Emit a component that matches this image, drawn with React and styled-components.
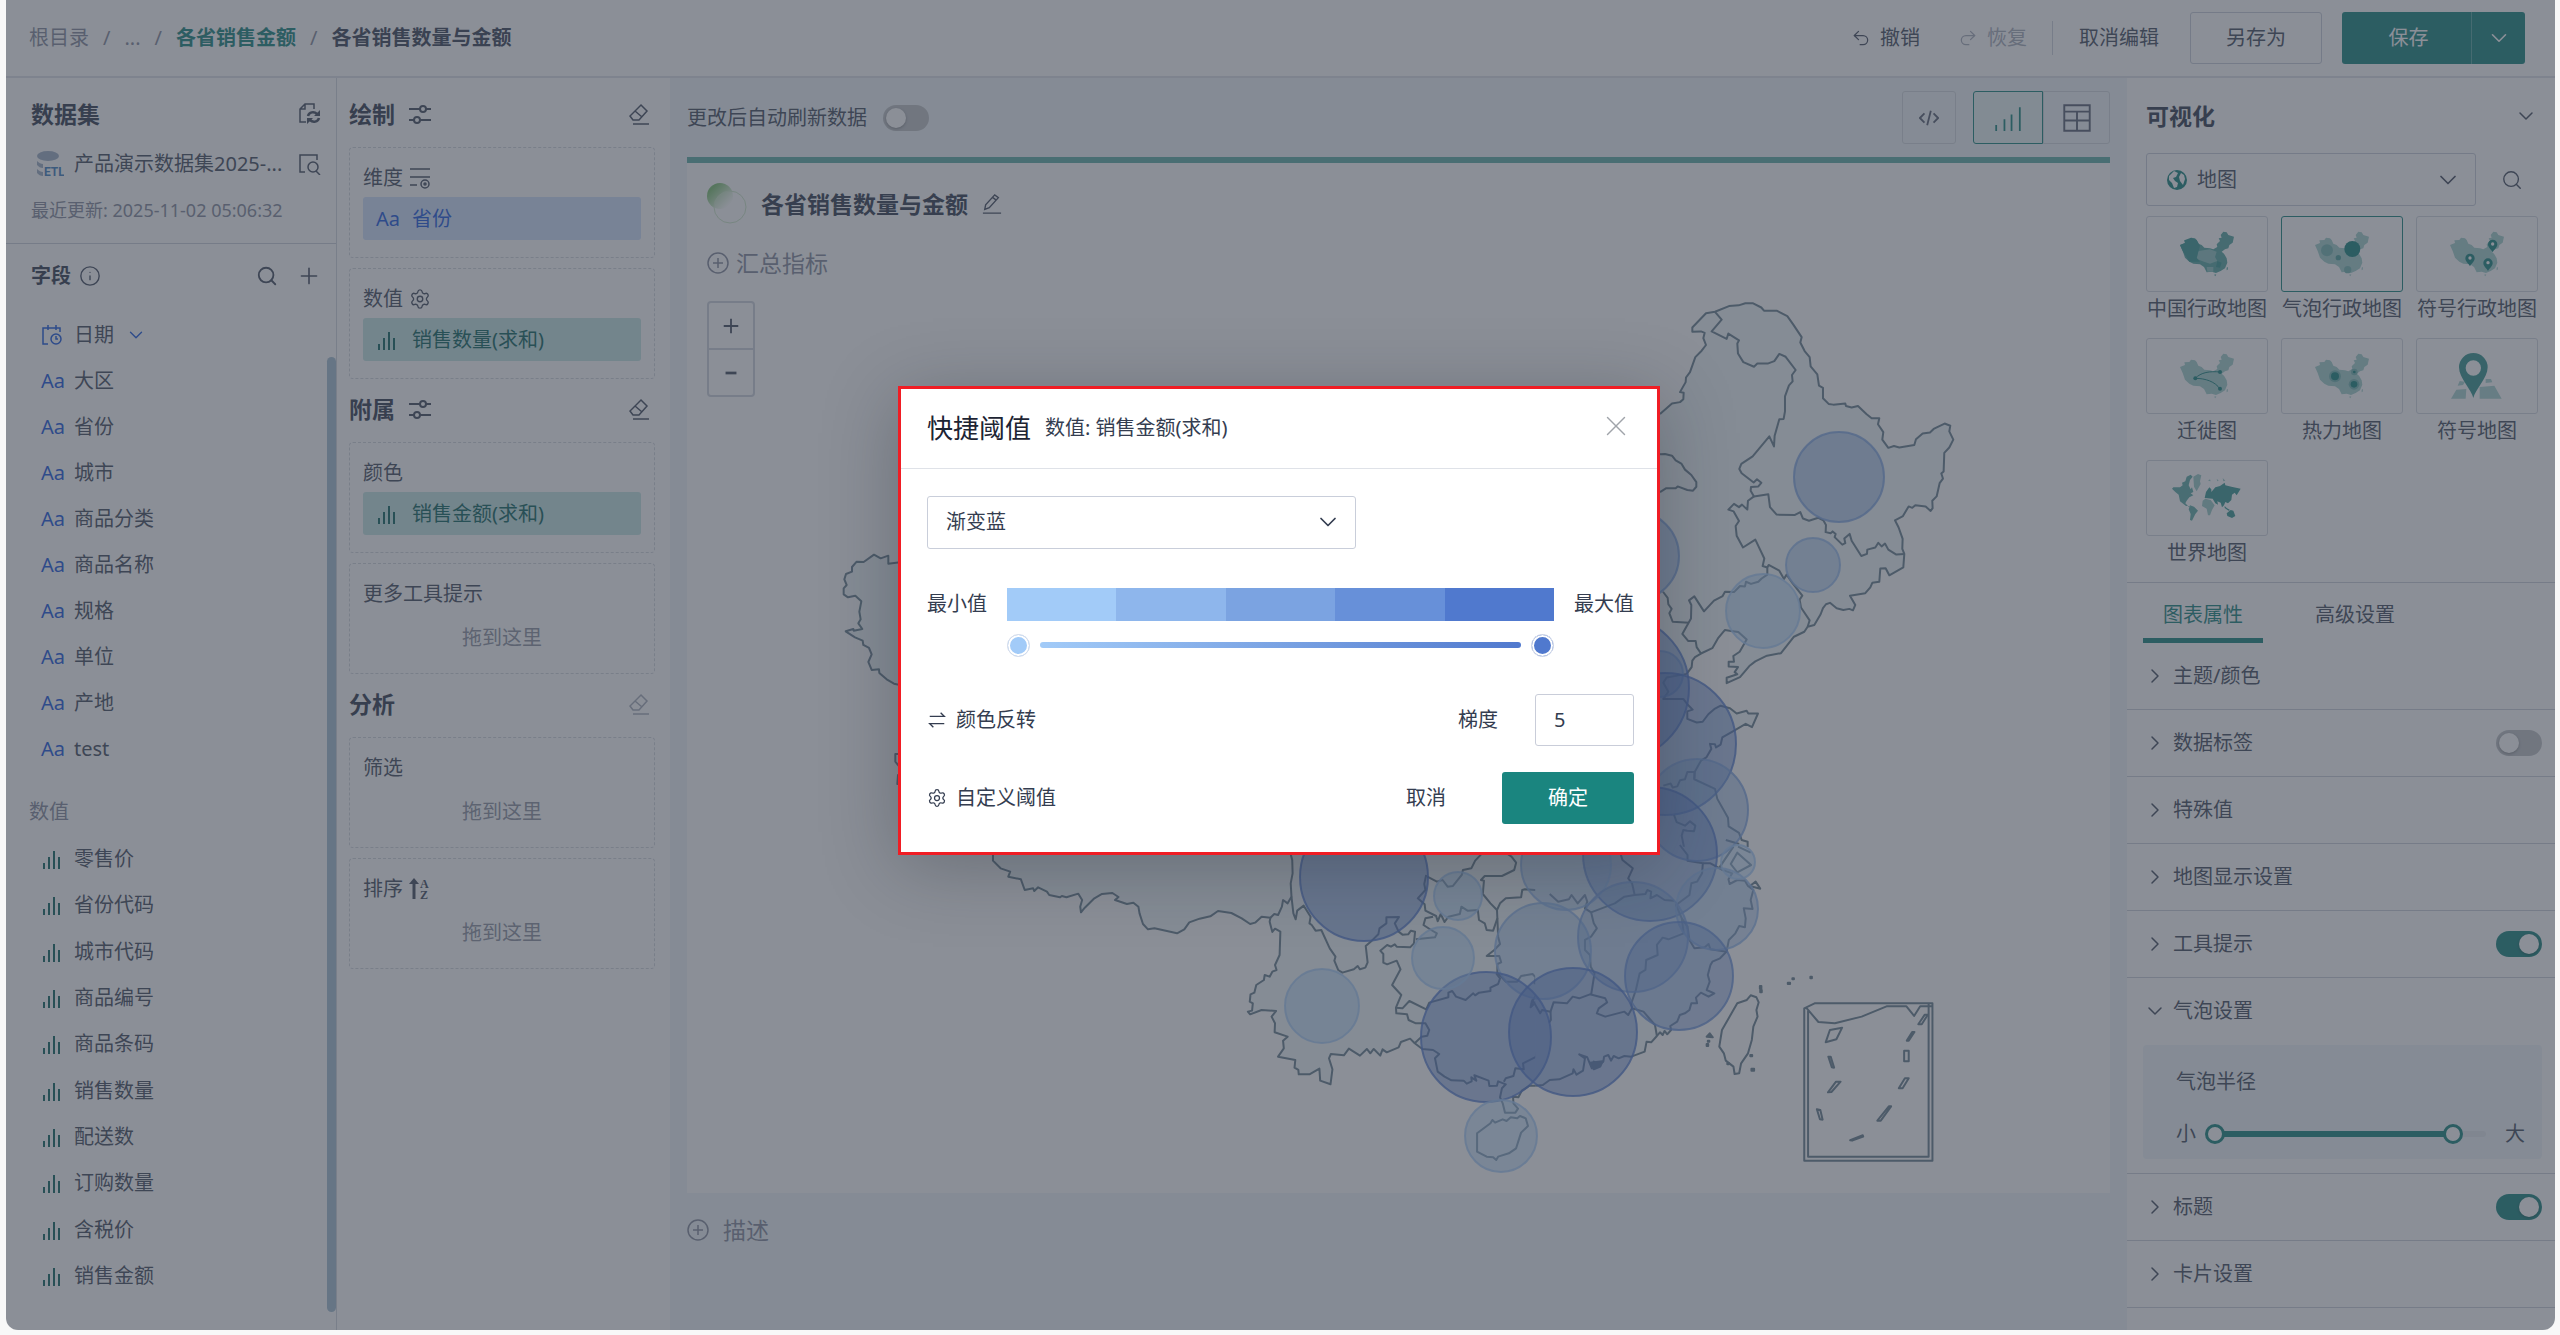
import React from 'react';
import styled, { createGlobalStyle } from 'styled-components';
import { ChevronDown, ChevronRight, Info, Plus, Redo2, Search, Settings, Undo2, X } from 'lucide-react';

const GlobalStyle = createGlobalStyle`
  * {
    box-sizing: border-box;
  }
  body {
    margin: 0;
    background: #f8f8f8;
    color: #454e60;
    font-family: 'Noto Sans', 'Noto Sans CJK SC', sans-serif;
    font-size: 20px;
    line-height: 30px;
  }
  button, input, select {
    margin: 0;
    padding: 0;
    border: 0;
    background: none;
    color: inherit;
    font: inherit;
  }
  a {
    color: inherit;
    text-decoration: none;
  }
  ul {
    margin: 0;
    padding: 0;
    list-style: none;
  }
  svg {
    display: block;
    flex: none;
  }
`;

const Frame = styled.div`
  position: relative;
  display: flex;
  flex-direction: column;
  min-height: calc(100vh - 5px);
  margin: 0 5px 5px 6px;
  overflow: hidden;
  border-radius: 0 0 12px 12px;
  background: #fff;
`;

/* header */

const Header = styled.header`
  display: flex;
  align-items: center;
  justify-content: space-between;
  height: 78px;
  padding: 0 30px 0 23px;
  border-bottom: 2px solid #dfe3e8;
`;

const Breadcrumb = styled.nav`
  display: flex;
  gap: 14px;
  color: #868c9d;
`;

const Crumb = styled.a`
  color: ${(p) => (p.$active ? '#1a857f' : p.$current ? '#3c4558' : '#868c9d')};
  font-weight: ${(p) => (p.$active || p.$current ? 700 : 400)};
`;

const Actions = styled.div`
  display: flex;
  align-items: center;
`;

const TextButton = styled.button`
  display: flex;
  align-items: center;
  gap: 9px;
  margin-right: ${(p) => p.$after || 0}px;
  color: ${(p) => (p.disabled ? '#a9aebb' : 'inherit')};
`;

const Divider = styled.span`
  width: 1px;
  height: 34px;
  margin-right: 26px;
  background: #cfd4dc;
`;

const OutlineButton = styled.button`
  width: 132px;
  height: 52px;
  margin-right: 20px;
  border: 1px solid #c9ceda;
  border-radius: 3px;
`;

const SaveGroup = styled.div`
  display: flex;
  height: 52px;
  overflow: hidden;
  border-radius: 3px;
  background: #1a857f;
  color: #fff;
`;

const SaveButton = styled.button`
  width: 130px;
  padding-left: 4px;
  border-right: 1px solid #58a8a3;
`;

const SaveMore = styled.button`
  display: grid;
  place-items: center;
  width: 53px;
`;

/* columns */

const Body = styled.div`
  display: flex;
  flex: 1;
`;

const Dataset = styled.aside`
  display: flex;
  flex-direction: column;
  flex: 0 0 331px;
  border-right: 1px solid #d3d8df;
`;

const DatasetHead = styled.div`
  padding: 0 15px 19px 25px;
  border-bottom: 1px solid #cdd2da;
`;

const HeadRow = styled.div`
  display: flex;
  align-items: center;
  justify-content: space-between;
  height: ${(p) => p.$height}px;
`;

const Title = styled.h2`
  margin: 0;
  color: #343d50;
  font-size: 23px;
  font-weight: 700;
  line-height: 34px;
`;

const DatasetName = styled.div`
  display: flex;
  align-items: center;
  gap: 10px;
  padding-left: 5px;
`;

const FieldsHead = styled.div`
  display: flex;
  align-items: center;
  justify-content: space-between;
  height: 64px;
  padding: 0 14px 0 25px;
`;

const FieldsTitle = styled.h3`
  margin: 0;
  color: #343d50;
  font-size: 20px;
  font-weight: 700;
`;

const Inline = styled.div`
  display: flex;
  align-items: center;
  gap: ${(p) => p.$gap}px;
`;

const Updated = styled.p`
  margin: 0;
  padding-top: 17px;
  color: #868c9d;
  font-size: 18px;
  line-height: 28px;
`;

const IconButton = styled.button`
  display: grid;
  place-items: center;
  color: ${(p) => (p.disabled ? '#a9aebb' : 'inherit')};
`;

const Fields = styled.div`
  position: relative;
  display: flex;
  flex: 1;
  flex-direction: column;
  padding: 4px 0 31px 35px;
`;

const FieldList = styled.ul`
  display: grid;
  flex: ${(p) => (p.$grow ? 1 : 'none')};
  grid-auto-rows: minmax(46px, 1fr);
`;

const Field = styled.li`
  display: flex;
  align-items: center;
  gap: 11px;
`;

const FieldMark = styled.span`
  width: 22px;
  color: ${(p) => (p.$measure ? '#0f6661' : '#1d5be0')};
`;

const GroupName = styled.div`
  margin: 25px 0 9px -12px;
  color: #868c9d;
`;

const ScrollThumb = styled.span`
  position: absolute;
  top: 49px;
  right: 0;
  bottom: 18px;
  width: 9px;
  border-radius: 5px;
  background: #a6c0d3;
`;

const Draw = styled.section`
  flex: 0 0 333px;
  padding: 6px 15px 0 12px;
`;

const DrawHeadRow = styled.div`
  display: flex;
  align-items: center;
  justify-content: space-between;
  height: 63px;
  padding: 0 5px 4px 0;
`;

const DropList = styled.div`
  display: grid;
  gap: 10px;
`;

const DropBox = styled.div`
  height: 111px;
  padding: 15px 13px;
  border: 1px dashed #d3d7de;
  border-radius: 4px;
`;

const DropLabel = styled.div`
  display: flex;
  align-items: center;
  gap: 6px;
  height: 34px;
  padding-bottom: 4px;
`;

const Hint = styled.div`
  padding-top: 10px;
  color: #8f95a4;
  text-align: center;
`;

const Pill = styled.div`
  display: flex;
  align-items: center;
  gap: 14px;
  height: 43px;
  padding-left: 13px;
  border-radius: 3px;
  background: ${(p) => (p.$measure ? '#c5e6e4' : '#d0e1fd')};
  color: ${(p) => (p.$measure ? '#0f6661' : '#1d5be0')};
`;

/* canvas */

const Center = styled.main`
  flex: 1;
  min-width: 0;
  padding: 0 17px;
  background: #f0f6f9;
`;

const Toolbar = styled.div`
  display: flex;
  align-items: center;
  justify-content: space-between;
  height: 79px;
`;

const SwitchLabel = styled.label`
  display: flex;
  align-items: center;
  gap: 16px;
`;

const Switch = styled.input`
  appearance: none;
  flex: none;
  width: 46px;
  height: 26px;
  padding: 3px;
  border-radius: 13px;
  background: #bfc2c6;

  &::before {
    content: '';
    display: block;
    width: 20px;
    height: 20px;
    border-radius: 10px;
    background: #fff;
    box-shadow: 0 1px 3px rgba(0, 0, 0, 0.3);
  }
  &:checked {
    background: #1a857f;
  }
  &:checked::before {
    margin-left: 20px;
  }
`;

const ToolButton = styled.button`
  display: grid;
  place-items: center;
  width: ${(p) => p.$width}px;
  height: 53px;
  border: 1px solid ${(p) => (p.$active ? '#1a857f' : '#d3d8df')};
  border-radius: ${(p) => p.$radius || '3px'};
  background: ${(p) => (p.$active ? '#eaf6f4' : 'transparent')};
  color: ${(p) => (p.$active ? '#1a857f' : '#5b6375')};
`;

const Card = styled.section`
  border-top: 6px solid #5fb0a8;
  background: #fff;
`;

const CardTitle = styled.div`
  display: flex;
  align-items: center;
  gap: 14px;
  height: 84px;
  padding: 0 0 2px 20px;
`;

const AddButton = styled.button`
  display: flex;
  align-items: center;
  gap: 7px;
  height: 32px;
  margin: 0 0 11px 20px;
  color: #868c9d;
  font-size: 23px;
  line-height: 32px;
`;

const Description = styled(AddButton)`
  gap: 14px;
  margin: 21px 0 0 0;
`;

const MapArea = styled.div`
  position: relative;

  > svg {
    width: 100%;
    height: auto;
  }
`;

const ZoomControl = styled.div`
  position: absolute;
  top: 11px;
  left: 20px;
  width: 48px;
  border: 2px solid #cfd4dc;
  border-radius: 4px;
`;

const ZoomButton = styled.button`
  display: grid;
  place-items: center;
  width: 100%;
  height: 45px;

  & + & {
    height: 47px;
    border-top: 2px solid #cfd4dc;
  }
`;

/* visual settings */

const Visual = styled.aside`
  flex: 0 0 428px;
`;

const VisualTop = styled.div`
  padding: 0 17px 14px 19px;
  border-bottom: 1px solid #cdd2da;
`;

const SelectBox = styled.div`
  display: grid;
  flex: none;
  align-items: center;
  width: ${(p) => p.$width}px;
  height: 53px;
  border: 1px solid #c9ceda;
  border-radius: 3px;

  > * {
    grid-area: 1 / 1;
  }
  > svg {
    pointer-events: none;
  }
  > svg:last-child {
    justify-self: end;
    margin-right: 13px;
  }
`;

const Select = styled.select`
  appearance: none;
  width: 100%;
  height: 100%;
  padding-left: ${(p) => p.$indent}px;
`;

const GlobeIcon = styled.svg`
  margin-left: 19px;
`;

const ChartGrid = styled.div`
  display: grid;
  grid-template-columns: repeat(3, 1fr);
  gap: 14px 13px;
  padding-top: 10px;
`;

const ChartType = styled.button`
  display: flex;
  flex-direction: column;
  align-items: center;
  gap: 2px;
`;

const Thumb = styled.span`
  display: grid;
  place-items: center;
  width: 100%;
  height: 76px;
  border: 1px solid ${(p) => (p.$active ? '#1a857f' : '#d3d8df')};
  border-radius: 3px;
`;

const Tabs = styled.div`
  display: flex;
  gap: 32px;
  padding-left: 16px;
`;

const Tab = styled.button`
  height: 60px;
  padding: 8px 20px 0;
  border-bottom: 5px solid ${(p) => (p.$active ? '#1a857f' : 'transparent')};
  color: ${(p) => (p.$active ? '#1a857f' : 'inherit')};
`;

const Section = styled.div`
  border-bottom: 1px solid #cdd2da;
`;

const SectionHead = styled.div`
  display: flex;
  align-items: center;
  justify-content: space-between;
  height: 66px;
  padding: 0 13px 0 16px;
`;

const SectionButton = styled.button`
  display: flex;
  align-items: center;
  gap: 6px;
`;

const RadiusPanel = styled.div`
  display: grid;
  gap: 22px;
  margin: 1px 13px 14px 16px;
  padding: 22px 17px 10px 33px;
  border-radius: 4px;
  background: #f0f6f9;
`;

const RangeRow = styled.div`
  display: flex;
  align-items: center;
  gap: 9px;
`;

const RangeTrack = styled.div`
  position: relative;
  display: flex;
  align-items: center;
  flex: 1;
  height: 20px;
  padding: 0 10px;

  &::before {
    content: '';
    flex: 1;
    height: 6px;
    border-radius: 3px;
    background: linear-gradient(to right, #1a857f ${(p) => p.$high}%, #e4e8ee ${(p) => p.$high}%);
  }
`;

const Range = styled.input`
  position: absolute;
  inset: 0;
  appearance: none;
  width: 100%;
  pointer-events: none;

  &::-webkit-slider-thumb {
    appearance: none;
    width: 20px;
    height: 20px;
    border: 3px solid #1a857f;
    border-radius: 10px;
    background: #fff;
    pointer-events: auto;
  }
`;

/* dialog */

const Mask = styled.div`
  position: absolute;
  inset: 0;
  display: grid;
  place-items: center;
  padding: 0 3px 90px 0;
  background: rgba(57, 64, 78, 0.59);
`;

const Dialog = styled.div`
  width: 762px;
  border: 3px solid #f01d24;
  background: #fff;
  color: #343d50;
  box-shadow: 0 12px 70px rgba(20, 30, 40, 0.28);
`;

const DialogHead = styled.div`
  display: flex;
  align-items: center;
  height: 80px;
  padding: 0 24px 0 26px;
  border-bottom: 1px solid #dfe2e8;
`;

const DialogTitle = styled.h2`
  margin: 0 14px 0 0;
  font-size: 26px;
  font-weight: 400;
  line-height: 38px;
  color: #1d2433;
`;

const Close = styled(IconButton)`
  margin-left: auto;
  padding-bottom: 5px;
  color: #a0a4aa;
`;

const DialogBody = styled.div`
  padding: 27px 23px 28px 26px;
`;

const ColorRow = styled.div`
  display: flex;
  align-items: center;
  gap: 20px;
  padding-top: 39px;
`;

const ColorBar = styled.div`
  display: flex;
  flex: 1;
  height: 33px;
`;

const ColorStep = styled.span`
  flex: 1;
  background: ${(p) => p.$color};
`;

const StopRow = styled.div`
  display: flex;
  align-items: center;
  gap: 10px;
  padding: 13px 80px 37px;
`;

const Stop = styled.button`
  width: 23px;
  height: 23px;
  border: 1px solid #d9deea;
  border-radius: 12px;
  background: ${(p) => p.$color};
  box-shadow: inset 0 0 0 2px #fff;
`;

const StopLine = styled.span`
  flex: 1;
  height: 6px;
  border-radius: 3px;
  background: linear-gradient(to right, #a2cbf8, #5079ce);
`;

const DialogRow = styled.div`
  display: flex;
  align-items: center;
  justify-content: space-between;
  padding-bottom: ${(p) => p.$after || 0}px;
`;

const StepLabel = styled.label`
  display: flex;
  align-items: center;
  gap: 37px;
`;

const StepInput = styled.input`
  width: 99px;
  height: 52px;
  padding-left: 18px;
  border: 1px solid #c9cdd9;
  border-radius: 3px;
`;

const Confirm = styled.button`
  width: 132px;
  height: 52px;
  border-radius: 3px;
  background: #1a857f;
  color: #fff;
`;

const PALETTE = ['#a2cbf8', '#8eb6ec', '#7ba3e1', '#6790d9', '#5079ce'];

const DIMENSIONS = ['大区', '省份', '城市', '商品分类', '商品名称', '规格', '单位', '产地', 'test'];
const MEASURES = ['零售价', '省份代码', '城市代码', '商品编号', '商品条码', '销售数量', '配送数', '订购数量', '含税价', '销售金额'];

// cx, cy, r, palette index
const BUBBLES = [
  [1839, 477, 45, 2], [1813, 565, 27, 1], [1763, 611, 37, 0], [1634, 556, 45, 2],
  [1660, 674, 23, 1], [1616, 688, 73, 4], [1665, 744, 71, 4], [1697, 810, 51, 2],
  [1650, 854, 67, 4], [1717, 909, 41, 1], [1738, 862, 17, 0], [1566, 865, 45, 1],
  [1543, 951, 48, 1], [1633, 937, 55, 2], [1679, 976, 54, 3], [1573, 1032, 64, 4],
  [1486, 1037, 65, 4], [1501, 1136, 36, 0], [1364, 877, 64, 4], [1458, 896, 24, 0],
  [1443, 958, 31, 0], [1322, 1006, 37, 0],
];

const NORTHEAST_LAND =
  'M180 347 216 318 240 314 250 306 251 288 240 286 257 258 258 245 270 230 286 188 305 170 318 154 310 135 314 120 303 116 277 117 277 105 318 65 345 61 387 45 416 43 436 37 458 37 484 49 492 58 530 58 562 73 580 97 605 132 601 147 614 171 629 188 632 214 652 236 657 268 669 274 669 303 686 319 700 321 736 318 738 325 755 329 774 325 800 348 815 359 838 359 834 376 850 398 847 419 865 442 882 437 898 441 943 434 948 418 968 402 990 399 1001 389 1034 374 1051 380 1048 396 1060 419 1048 441 1033 456 1031 508 1024 514 1029 528 1019 541 1010 578 997 590 998 611 992 619 977 606 946 603 937 610 926 606 909 633 885 645 896 665 908 697 907 725 913 739 910 777 868 799 857 779 841 780 838 817 817 820 811 833 796 849 750 856 766 882 759 897 748 893 730 896 710 891 690 876 678 880 669 891 662 908 643 938 623 943 613 957 582 971 543 1017 501 1024 466 1040 448 1053 420 1084 380 1101 380 1086 412 1076 404 1070 414 1056 386 1054 386 1041 402 1041 400 1025 419 1013 440 979 415 958 393 955 375 952 355 974 337 1003 303 1018 285 1028 277 1038 275 1056 260 1075 200 1085 190 1100 205 1125 190 1145 225 1145 250 1145 262 1160 278 1175 262 1180 262 1201 290 1211 308 1209 325 1188 345 1172 362 1164 390 1171 410 1186 440 1178 445 1186 474 1186 456 1224 437 1215 400 1235 367 1253 362 1273 348 1281 345 1272 330 1271 334 1285 319 1309 303 1318 284 1350 283 1370 345 1397 352 1425 384 1478 386 1502 417 1520 425 1540 443 1545 443 1560';

const NORTHEAST_BORDERS = [
  'M345 61 365 83 335 116 380 137 385 122 417 141 412 150 414 178 430 202 462 215 472 206 503 206 523 199 538 179 557 187 587 224 576 238 578 256 567 267 555 298 555 340 551 361 538 362 524 408 522 438 508 410 458 466 424 487 418 501 425 513 461 539 471 530 484 540 475 550 453 552 452 562 462 578 505 572 510 608 530 629 585 630 601 622 609 640 627 646 655 638 670 645 678 658 677 678 692 681 698 676 707 683 704 692 727 713 736 709 733 696 749 683 755 702 784 745 801 739 802 727 826 721 835 708 845 718 855 710 865 727 889 741 913 739',
  'M462 578 444 590 442 615 426 601 417 608 402 599 385 615 401 620 417 647 407 661 410 688 429 721 466 699 493 752 488 773 502 777 506 770 538 786 552 809 560 797 577 820 607 856 599 867 603 889 629 925 623 943',
  'M502 777 502 797 485 808 475 817 453 823 438 817 435 830 420 829 402 846 375 845 368 857 342 870 312 900 283 858 267 869 274 882 273 920 247 963 265 983 287 983 290 1000 303 1018',
  'M189 845 203 862 205 880 215 893 208 905 218 929 267 932',
  'M180 460 195 459 216 464 227 477 244 486 255 503 274 518 289 538 289 551 279 562 262 560 233 550 227 555 199 555 180 566',
  'M283 1370 284 1350 262 1350 255 1370 240 1373 232 1390 218 1393 212 1382 190 1388',
  'M222 1470 230 1490 255 1500 270 1488 286 1500 282 1516 262 1514 250 1512 245 1528 252 1560',
];

const WEST_LAND =
  'M210 97 175 101 175 77 152 85 132 74 101 96 80 95 66 111 66 125 48 132 43 148 50 165 41 175 41 193 54 202 76 197 94 214 88 245 92 268 85 280 97 297 71 302 70 297 47 304 75 322 98 332 100 345 117 354 125 373 115 396 125 420 147 418 148 429 170 448 192 461 210 465';

const WEST_BORDER = 'M210 672H196V695L208 710M212 735H204L202 762H212';

const SOUTHWEST_LAND =
  'M60 30 60 62 80 85 105 95 100 110 133 118 143 150 165 145 168 153 178 142 201 155 207 165 235 172 240 168 252 172 283 161 293 180 288 200 290 217 300 203 325 175 345 162 372 159 388 171 379 180 410 192 427 188 440 200 443 220 452 252 465 268 482 265 541 280 560 268 573 247 600 236 628 229 648 213 683 219 710 235 732 252 745 248 762 230 785 233 783 245 790 276 797 266 811 275 809 345 797 375 801 390 790 395 783 410 770 405 768 420 748 435 743 458 733 463 731 485 739 490 737 512 726 515 732 523 762 510 800 513 788 530 797 550 796 577 830 590 818 602 820 625 805 650 850 660 848 683 858 690 859 703 887 703 913 686 915 722 942 733 947 688 938 655 943 642 977 646 990 626 1019 647 1037 627 1046 640 1055 627 1072 647 1078 628 1089 637 1120 622 1126 606 1150 596 1162 610 1182 627 1210 630 1226 642 1215 655 1222 695 1240 710 1258 721 1290 722 1298 731 1311 724 1310 712 1323 722 1318 706 1355 722 1357 738 1377 737 1380 724 1400 733 1390 745 1385 772 1392 790 1398 818 1425 818 1432 806 1420 790 1419 770 1433 772 1442 752 1462 737 1477 737';

const SOUTHWEST_BORDERS = [
  'M835 30 842 60 843 100 838 130 840 170 830 190 818 180 815 200 805 225 795 222 785 233',
  'M840 170 845 220 851 238 855 212 872 197 890 230 887 250 893 255 903 272 918 270 940 325 955 350 952 362 962 390 973 398 1003 388 1013 378 1019 388 1033 383 1039 367 1034 318 1050 302 1067 283 1070 265 1088 250 1088 232 1121 231 1110 250 1120 275 1130 284 1145 283 1152 272 1163 275 1160 310 1150 322 1115 320 1110 313 1100 320 1090 315 1072 332 1080 342 1080 368 1090 373 1115 362 1125 388 1103 435 1127 465 1113 503 1130 505 1148 483 1192 508 1200 488 1250 472 1250 458 1260 453 1270 470 1295 480 1315 460 1320 466 1330 458 1360 453 1360 443 1380 432 1385 415 1375 400',
  'M1113 503 1114 520 1142 523 1146 540 1165 550 1190 550 1200 570 1195 587 1180 590 1162 610',
  'M1192 105 1187 132 1190 150 1170 175 1188 193 1190 212 1218 228 1222 244 1230 222 1240 246 1250 230 1280 222 1284 200 1300 212 1327 210 1330 240 1345 250 1350 270 1367 272 1378 235 1377 210 1360 190 1340 162 1343 122 1335 120 1345 108 1390 108 1422 90 1427 68 1415 50 1390 30',
  'M1195 110 1220 125 1235 120 1248 140 1262 138 1285 105 1288 90 1310 85 1320 62 1340 38',
  'M1377 210 1385 190 1400 175 1440 172 1443 150 1450 148 1500 152 1535 185 1568 170',
  'M1210 230 1190 235 1185 255 1205 270 1220 280 1215 292 1165 298',
  'M1378 235 1380 290 1385 312 1370 330 1350 348 1383 348 1388 367 1378 372 1378 400',
  'M1380 400 1400 425 1430 425 1440 408 1470 402 1478 412 1475 430 1490 432 1480 465 1468 485 1465 502 1480 485 1495 520',
  'M1518 520 1515 560 1500 575 1485 600 1480 650 1445 670 1447 688 1425 685 1420 708 1400 715 1395 725',
  'M1325 880 1360 850 1365 840 1372 848 1392 838 1402 843 1413 832 1430 835 1437 828 1452 835 1458 858 1440 878 1427 925 1408 940 1380 950 1375 960 1367 952 1350 950 1325 935Z',
];

const SOUTHEAST_LAND =
  'M92 737 112 735 130 720 155 718 190 700 192 688 200 704 217 692 222 655 207 643 228 652 240 685 245 665 262 672 270 665 272 650 283 645 290 662 297 648 310 655 325 648 343 650 378 635 383 605 395 607 410 588 418 577 425 585 430 573 437 583 447 570 445 558 463 545 470 525 483 520 495 510 500 490 515 490 512 473 525 458 545 470 560 460 540 450 548 425 543 405 550 375 555 365 575 355 592 335 598 300 615 280 625 258 640 262 642 235 637 205 660 207 655 180 662 150 648 138 640 122 620 120 600 132 597 118 607 100 582 90 575 80 610 20';

const SOUTHEAST_BORDERS = [
  'M130 162 152 185 180 178 187 165 203 190 222 165 228 185 222 205 238 217 245 250 253 265 238 290 222 300 222 330 235 345 237 380 247 400 238 465',
  'M238 217 300 190 325 170 352 165 345 130 335 115 347 85 320 60 312 30',
  'M352 165 380 162 385 150 395 155 393 175 410 165 430 180 455 182',
  'M470 15 490 45 490 62 530 70 528 100 515 125 500 130 495 165 460 195 475 235 480 280 440 298 425 293 410 315 412 345 382 360 380 390 365 400 355 450 343 490 345 505 375 515 405 555 410 588',
  'M530 70 550 70 582 90',
  'M475 235 490 260 495 300 508 325 535 322 545 312 550 328 592 335',
  'M82 498 85 480 105 520 110 510 132 515 140 487 175 490 190 470 207 475 235 463 275 475 280 487 258 505 253 520 275 530 325 515 335 525 345 505',
  'M132 515 133 540 128 548',
  'M655 466 670 472 676 487 670 510 673 530 662 560 658 600 648 640 630 670 625 700 613 702 610 680 590 662 585 640 573 620 580 570 605 520 620 490 645 480Z',
  'M620 38 656 75 620 97 603 72Z',
  'M653 138 668 125 680 146Z',
  'M622 20 655 38 M590 0 625 12',
  // inset frame and its dashes
  'M795 505 822 490H1130V962H795Z M805 512V950H1120V490 M800 503 832 546 875 550 945 530 1010 499H1062L1082 528 1098 499H1130',
  'M862 570 894 563 879 598 851 607Z M858 650 864 650 873 683 867 682Z M878 725 890 725 866 756 857 757Z M828 808 837 810 843 839 836 838Z M915 901 948 886 949 890 920 902Z M986 842 1016 799 1022 799 995 842Z M1042 745 1058 715 1068 715 1052 745Z M1056 632H1068V664H1056Z M1063 602 1077 576 1083 576 1068 602Z M1093 553 1110 524 1118 524 1102 553Z',
];

const ISLANDS =
  'M540 590 548 580 556 592Z M540 612h4v6h-4Z M752 428h6v4h-6Z M764 415h4v3h-4Z M811 410h4v5h-4Z M679 438h4v8h-4Z M680 450h4v7h-4Z M654 645h5v4h-5Z M657 686h7v6h-7Z M235 668 268 664 262 680 245 688Z M594 669h4v4h-4Z M543 602h4v3h-4Z';

const CHINA =
  'M0 42 15 36 13 28 28 27 33 20 45 22 50 27 55 38 65 42 73 50 90 52 100 55 112 48 110 40 120 30 116 22 125 20 122 12 130 2 140 4 145 12 162 17 158 35 148 42 145 52 135 55 125 62 132 68 140 82 142 95 135 112 122 120 108 126 95 122 80 124 72 108 60 100 40 98 28 92 15 80 8 60Z M140 110 144 108 143 116 140 118Z M102 131 109 130 106 136Z';

const Svg = ({ size = 22, children, ...rest }) => (
  <svg width={size} height={size} viewBox="0 0 22 22" fill="none" stroke="currentColor" strokeWidth="1.5" {...rest}>
    {children}
  </svg>
);

const BarsIcon = () => (
  <Svg strokeWidth="2">
    <path d="M3 15v6M8 9v12M13 3v18M18 9v12" />
  </Svg>
);

const EraserIcon = () => (
  <Svg>
    <path d="M13 2 19 8 11 17H5L2 13ZM7 8l7 6M5 21h16" />
  </Svg>
);

const SlidersIcon = () => (
  <Svg strokeWidth="2">
    <path d="M0 6h11M17 6h5M0 17h5M11 17h11" />
    <circle cx="14" cy="6" r="3" />
    <circle cx="8" cy="17" r="3" />
  </Svg>
);

const DatasetRefreshIcon = () => (
  <Svg>
    <path d="M7 19H1V6l5-5h9v5M1 6h5V1" />
    <path d="M9 13c1-4 6-5 9-2M20 15c-1 4-6 5-9 2" strokeWidth="2.5" />
    <path d="M21 7v6h-6ZM8 21v-6h6Z" fill="currentColor" stroke="none" />
  </Svg>
);

const PreviewIcon = () => (
  <Svg>
    <path d="M6 19H1V2h17v5" />
    <circle cx="14" cy="14" r="5" />
    <path d="m17 18 4 4" />
  </Svg>
);

const EtlIcon = () => (
  <svg width="28" height="28" viewBox="0 0 28 28">
    <ellipse cx="12" cy="6" rx="11" ry="5" fill="#9fb0c6" />
    <path d="M1 11c2 2 4 3 6 3v4c-3 0-4-1-6-3ZM1 19c2 2 4 3 6 3v4c-3 0-4-1-6-3Z" fill="#9fb0c6" />
    <text x="8" y="26" fontSize="12" fontWeight="700" fill="#3f7fc0" fontFamily="Roboto">ETL</text>
  </svg>
);

const CalendarIcon = () => (
  <Svg>
    <path d="M7 20H2V4h17v4M7 1v5M15 1v5" />
    <circle cx="15" cy="15" r="5" />
    <path d="M15 12v3h2" />
  </Svg>
);

const LinesIcon = () => (
  <Svg>
    <path d="M1 2h20M1 10h20M1 18h7" />
    <circle cx="16" cy="17" r="4" />
    <circle cx="16" cy="17" r="1" />
  </Svg>
);

const SortIcon = () => (
  <Svg>
    <path d="M5 21V3" strokeWidth="3" />
    <path d="M0 6 5 0l5 6Z" fill="currentColor" stroke="none" />
    <text x="11" y="10" fontSize="12" fontWeight="700" fill="currentColor" stroke="none" fontFamily="Liberation Serif">A</text>
    <text x="11" y="21" fontSize="12" fontWeight="700" fill="currentColor" stroke="none" fontFamily="Liberation Serif">Z</text>
  </Svg>
);

const CircleDropIcon = () => (
  <svg width="40" height="42" viewBox="0 0 40 42">
    <defs>
      <linearGradient id="leaf" x1="0" y1="0" x2="1" y2="1">
        <stop offset="0.2" stopColor="#7fc274" />
        <stop offset="0.85" stopColor="#fff" />
      </linearGradient>
    </defs>
    <circle cx="13" cy="13" r="13" fill="url(#leaf)" />
    <circle cx="23" cy="24" r="16" fill="#fff" fillOpacity="0.25" stroke="#cfe8ca" />
  </svg>
);

const EditIcon = () => (
  <Svg size={20}>
    <path d="M3 17 4 12 14 1l4 3L8 15ZM12 4l4 3M1 21h20" />
  </Svg>
);

const PlusCircleIcon = () => (
  <Svg>
    <circle cx="11" cy="11" r="10" />
    <path d="M11 6v10M6 11h10" />
  </Svg>
);

const Globe = () => (
  <GlobeIcon width="22" height="22" viewBox="0 0 22 22">
    <circle cx="11" cy="11" r="10" fill="#1a857f" />
    <path d="M8 2 12 4 10 8 7 9 9 12 12 14 11 18 8 19 6 14 3 11 3 7ZM15 4 18 6 19 10 17 16 14 12 13 8Z" fill="#fff" />
  </GlobeIcon>
);

const Pin = ({ x, y }) => (
  <g transform={`translate(${x} ${y})`}>
    <path d="M0 26C-4 18-14 12-14 2a14 14 0 0 1 28 0C14 12 4 18 0 26Z" fill="#1a857f" />
    <circle cy="1" r="5" fill="#fff" />
  </g>
);

const ChinaThumb = ({ dark, children }) => (
  <svg width="54" height="46" viewBox="0 0 162 138">
    <path d={CHINA} fill={dark ? '#57a8a3' : '#a3d0cd'} />
    {children}
  </svg>
);

const THUMBS = [
  {
    name: '中国行政地图',
    art: (
      <ChinaThumb dark>
        <path d="M55 60 90 55 110 62 105 78 112 90 90 98 72 92 50 84Z M80 108 100 108 100 122 82 122Z" fill="#8fc6c2" />
        <path d="M0 42 15 36 13 28 33 20 50 27 60 44 50 80 60 92 28 92 8 60Z M112 90 125 95 120 110 108 108Z" fill="#3a9a94" />
      </ChinaThumb>
    ),
  },
  {
    name: '气泡行政地图',
    active: true,
    art: (
      <ChinaThumb>
        <circle cx="36" cy="58" r="18" fill="#76b6b2" />
        <circle cx="70" cy="80" r="8" fill="#4fa19c" />
        <circle cx="98" cy="116" r="11" fill="#76b6b2" />
        <circle cx="112" cy="54" r="24" fill="#1a857f" />
      </ChinaThumb>
    ),
  },
  {
    name: '符号行政地图',
    art: (
      <ChinaThumb>
        <Pin x={128} y={38} />
        <Pin x={60} y={80} />
        <Pin x={114} y={94} />
      </ChinaThumb>
    ),
  },
  {
    name: '迁徙图',
    art: (
      <ChinaThumb>
        <path d="M46 76C62 58 90 54 120 57M46 76c30 0 60 10 74 32" fill="none" stroke="#1a857f" strokeWidth="3" />
        <circle cx="46" cy="76" r="6" fill="#1a857f" />
        <circle cx="120" cy="57" r="6" fill="#1a857f" />
        <circle cx="120" cy="107" r="6" fill="#1a857f" />
      </ChinaThumb>
    ),
  },
  {
    name: '热力地图',
    art: (
      <ChinaThumb>
        {[[60, 70, 18], [118, 57, 10], [117, 94, 16]].map(([x, y, r]) => (
          <g key={x}>
            <circle cx={x} cy={y} r={r} fill="#76b6b2" />
            <circle cx={x} cy={y} r={r - 6} fill="#1a857f" />
          </g>
        ))}
      </ChinaThumb>
    ),
  },
  {
    name: '符号地图',
    art: (
      <svg width="52" height="46" viewBox="0 0 156 138">
        <path d="M16 110 46 108 44 137 0 137Z M86 102 130 98 152 137 86 137Z M26 84 42 86 36 96 20 98Z M104 78 120 78 124 88 104 90Z" fill="#a9d3d0" />
        <path d="M67 135C62 110 24 76 24 43a43 43 0 0 1 86 0C110 76 72 110 67 135Z M67 22a23 23 0 1 0 0 46 23 23 0 0 0 0-46Z" fill="#37958f" fillRule="evenodd" />
      </svg>
    ),
  },
  {
    name: '世界地图',
    art: (
      <svg width="70" height="48" viewBox="0 0 210 144">
        <path d="M0 44 4 40 24 40 32 34 30 26 40 22 44 8 56 2 62 8 54 18 50 34 56 46 60 40 64 54 56 58 64 64 52 70 44 80 40 88 50 98 56 96 42 96 24 82 20 62 10 54Z M54 94 66 98 78 110 70 120 60 140 54 138 56 120 50 106Z" fill="#5fada8" />
        <path d="M64 8 78 0 88 4 84 22 86 30 74 52 66 38Z M92 80 100 74 116 78 128 94 120 108 114 124 108 124 104 104 90 96Z M108 20l6-4 2 6Z M134 14l6 6-4 2Z M152 12l8 8-6 2Z" fill="#9acbc8" />
        <path d="M98 72 102 54 112 40 118 46 118 54 130 40 144 36 158 26 160 34 178 38 206 44 200 54 194 64 188 56 180 62 178 78 168 88 160 84 156 94 150 100 146 86 136 82 138 92 130 88 122 74Z M164 118 176 108 184 110 190 126 180 132 166 126Z M158 96l6 6 10 6-4 2-12-8Z" fill="#3a9a94" />
      </svg>
    ),
  },
];

const mapTile = { stroke: '#6a8090', strokeWidth: 2, fill: 'none', strokeLinejoin: 'round' };

const Lines = ({ paths }) => paths.map((d) => <path key={d} d={d} vectorEffect="non-scaling-stroke" />);

const ChinaMap = () => (
  <svg viewBox="687 290 1423 903" role="img" aria-label="各省销售数量与金额">
    <g {...mapTile}>
      <g transform="translate(1600 290) scale(0.3333 0.3571)">
        <path d={`${NORTHEAST_LAND} 0 1560 0 347`} fill="#f0f7fa" stroke="none" />
        <Lines paths={[NORTHEAST_LAND, ...NORTHEAST_BORDERS]} />
      </g>
      <g transform="translate(830 530) scale(0.3333)">
        <path d={WEST_LAND} fill="#f0f7fa" stroke="none" />
        <Lines paths={[WEST_LAND, WEST_BORDER]} />
      </g>
      <g transform="translate(970 840) scale(0.3827 0.3333)">
        <path d={`${SOUTHWEST_LAND} 1477 0 60 0`} fill="#f0f7fa" stroke="none" />
        <Lines paths={[SOUTHWEST_LAND, ...SOUTHWEST_BORDERS]} />
      </g>
      <g transform="translate(1500 840) scale(0.3827 0.3333)">
        <path d={`${SOUTHEAST_LAND} 92 20Z`} fill="#f0f7fa" stroke="none" />
        <Lines paths={[SOUTHEAST_LAND, ...SOUTHEAST_BORDERS]} />
        <path d={ISLANDS} fill="#6a8090" vectorEffect="non-scaling-stroke" />
      </g>
    </g>
    {BUBBLES.map(([cx, cy, r, level]) => (
      <circle
        key={`${cx}-${cy}`}
        cx={cx}
        cy={cy}
        r={r}
        fill={PALETTE[level]}
        fillOpacity="0.45"
        stroke={PALETTE[level]}
        strokeOpacity="0.8"
        strokeWidth="2"
      />
    ))}
  </svg>
);

function SettingSection({ name, toggle, open, children }) {
  const Arrow = open ? ChevronDown : ChevronRight;
  return (
    <Section>
      <SectionHead>
        <SectionButton aria-expanded={Boolean(open)}>
          <Arrow size={24} strokeWidth={1.5} />
          {name}
        </SectionButton>
        {toggle && <Switch type="checkbox" role="switch" aria-label={name} defaultChecked={toggle === 'on'} />}
      </SectionHead>
      {children}
    </Section>
  );
}

function DropZone({ label, icon, pill, measure }) {
  return (
    <DropBox>
      <DropLabel>
        {label}
        {icon}
      </DropLabel>
      {pill ? (
        <Pill $measure={measure}>
          <FieldMark $measure={measure}>{measure ? <BarsIcon /> : 'Aa'}</FieldMark>
          {pill}
        </Pill>
      ) : (
        <Hint>拖到这里</Hint>
      )}
    </DropBox>
  );
}

function DrawHead({ title, sliders, disabled }) {
  return (
    <DrawHeadRow>
      <Inline $gap={14}>
        <Title>{title}</Title>
        {sliders && <SlidersIcon />}
      </Inline>
      <IconButton aria-label={`清空${title}`} disabled={disabled}>
        <EraserIcon />
      </IconButton>
    </DrawHeadRow>
  );
}

function ThresholdDialog() {
  return (
    <Mask>
      <Dialog role="dialog" aria-label="快捷阈值">
        <DialogHead>
          <DialogTitle>快捷阈值</DialogTitle>
          <span>数值: 销售金额(求和)</span>
          <Close aria-label="关闭">
            <X size={34} strokeWidth={1} />
          </Close>
        </DialogHead>
        <DialogBody>
          <SelectBox $width={429}>
            <Select $indent={18} aria-label="配色">
              <option>渐变蓝</option>
            </Select>
            <ChevronDown size={28} strokeWidth={1.5} />
          </SelectBox>
          <ColorRow>
            最小值
            <ColorBar>
              {PALETTE.map((color) => (
                <ColorStep key={color} $color={color} />
              ))}
            </ColorBar>
            最大值
          </ColorRow>
          <StopRow>
            <Stop $color="#a2cbf8" aria-label="起始颜色" />
            <StopLine />
            <Stop $color="#5079ce" aria-label="结束颜色" />
          </StopRow>
          <DialogRow $after={26}>
            <TextButton>
              <Svg size={20}>
                <path d="M3 7h16l-4-4M19 15H3l4 4" />
              </Svg>
              颜色反转
            </TextButton>
            <StepLabel>
              梯度
              <StepInput type="text" defaultValue="5" />
            </StepLabel>
          </DialogRow>
          <DialogRow>
            <TextButton>
              <Settings size={20} strokeWidth={1.5} />
              自定义阈值
            </TextButton>
            <Inline $gap={56}>
              <button>取消</button>
              <Confirm>确定</Confirm>
            </Inline>
          </DialogRow>
        </DialogBody>
      </Dialog>
    </Mask>
  );
}

function App() {
  return (
    <Frame>
      <GlobalStyle />
      <Header>
        <Breadcrumb>
          <Crumb href="#">根目录</Crumb>/<Crumb href="#">...</Crumb>/
          <Crumb href="#" $active>各省销售金额</Crumb>/<Crumb as="span" $current>各省销售数量与金额</Crumb>
        </Breadcrumb>
        <Actions>
          <TextButton $after={38}>
            <Undo2 size={20} strokeWidth={1.5} />
            撤销
          </TextButton>
          <TextButton $after={25} disabled>
            <Redo2 size={20} strokeWidth={1.5} />
            恢复
          </TextButton>
          <Divider />
          <TextButton $after={31}>取消编辑</TextButton>
          <OutlineButton>另存为</OutlineButton>
          <SaveGroup>
            <SaveButton>保存</SaveButton>
            <SaveMore aria-label="更多保存选项">
              <ChevronDown size={26} strokeWidth={1.5} />
            </SaveMore>
          </SaveGroup>
        </Actions>
      </Header>

      <Body>
        <Dataset>
          <DatasetHead>
            <HeadRow $height={71}>
              <Title>数据集</Title>
              <IconButton aria-label="更换数据集">
                <DatasetRefreshIcon />
              </IconButton>
            </HeadRow>
            <HeadRow $height={30}>
              <DatasetName>
                <EtlIcon />
                产品演示数据集2025-...
              </DatasetName>
              <IconButton aria-label="预览数据">
                <PreviewIcon />
              </IconButton>
            </HeadRow>
            <Updated>最近更新: 2025-11-02 05:06:32</Updated>
          </DatasetHead>
          <FieldsHead>
            <Inline $gap={8}>
              <FieldsTitle>字段</FieldsTitle>
              <Info size={22} strokeWidth={1.5} />
            </Inline>
            <Inline $gap={18}>
              <IconButton aria-label="搜索字段">
                <Search size={22} strokeWidth={2} />
              </IconButton>
              <IconButton aria-label="新增字段">
                <Plus size={26} strokeWidth={1.5} />
              </IconButton>
            </Inline>
          </FieldsHead>
          <Fields>
            <FieldList>
              <Field>
                <FieldMark>
                  <CalendarIcon />
                </FieldMark>
                日期
                <FieldMark>
                  <ChevronDown size={22} strokeWidth={1.5} />
                </FieldMark>
              </Field>
              {DIMENSIONS.map((name) => (
                <Field key={name}>
                  <FieldMark>Aa</FieldMark>
                  {name}
                </Field>
              ))}
            </FieldList>
            <GroupName>数值</GroupName>
            <FieldList $grow>
              {MEASURES.map((name) => (
                <Field key={name}>
                  <FieldMark $measure>
                    <BarsIcon />
                  </FieldMark>
                  {name}
                </Field>
              ))}
            </FieldList>
            <ScrollThumb />
          </Fields>
        </Dataset>

        <Draw>
          <DrawHead title="绘制" sliders />
          <DropList>
            <DropZone label="维度" icon={<LinesIcon />} pill="省份" />
            <DropZone label="数值" icon={<Settings size={22} strokeWidth={1.5} />} pill="销售数量(求和)" measure />
          </DropList>
          <DrawHead title="附属" sliders />
          <DropList>
            <DropZone label="颜色" pill="销售金额(求和)" measure />
            <DropZone label="更多工具提示" />
          </DropList>
          <DrawHead title="分析" disabled />
          <DropList>
            <DropZone label="筛选" />
            <DropZone label="排序" icon={<SortIcon />} />
          </DropList>
        </Draw>

        <Center>
          <Toolbar>
            <SwitchLabel>
              更改后自动刷新数据
              <Switch type="checkbox" role="switch" />
            </SwitchLabel>
            <Inline $gap={17}>
              <ToolButton $width={54} aria-label="代码">
                <Svg size={20}>
                  <path d="M6 6 1 11l5 5M16 6l5 5-5 5M13 3 9 19" strokeWidth="2" />
                </Svg>
              </ToolButton>
              <Inline $gap={0}>
                <ToolButton $width={70} $radius="3px 0 0 3px" $active aria-label="图表">
                  <Svg size={26}>
                    <path d="M1 17v5M8 12v10M14 8v14M21 2v20" />
                  </Svg>
                </ToolButton>
                <ToolButton $width={67} $radius="0 3px 3px 0" aria-label="表格">
                  <Svg size={28}>
                    <path d="M1 1h20v20H1ZM1 6h20M1 13h20M11 6v15" />
                  </Svg>
                </ToolButton>
              </Inline>
            </Inline>
          </Toolbar>
          <Card>
            <CardTitle>
              <CircleDropIcon />
              <Title>各省销售数量与金额</Title>
              <EditIcon />
            </CardTitle>
            <AddButton>
              <PlusCircleIcon />
              汇总指标
            </AddButton>
            <MapArea>
              <ChinaMap />
              <ZoomControl>
                <ZoomButton aria-label="放大">
                  <Svg size={20} strokeWidth="2">
                    <path d="M11 3v16M3 11h16" />
                  </Svg>
                </ZoomButton>
                <ZoomButton aria-label="缩小">
                  <Svg size={20} strokeWidth="3">
                    <path d="M5 11h12" />
                  </Svg>
                </ZoomButton>
              </ZoomControl>
            </MapArea>
          </Card>
          <Description>
            <PlusCircleIcon />
            描述
          </Description>
        </Center>

        <Visual>
          <VisualTop>
            <HeadRow $height={75}>
              <Title>可视化</Title>
              <IconButton aria-label="收起">
                <ChevronDown size={24} strokeWidth={1.5} />
              </IconButton>
            </HeadRow>
            <Inline $gap={25}>
              <SelectBox $width={330}>
                <Select $indent={50} aria-label="图表类型">
                  <option>地图</option>
                </Select>
                <Globe />
                <ChevronDown size={28} strokeWidth={1.5} />
              </SelectBox>
              <IconButton aria-label="搜索图表">
                <Search size={22} strokeWidth={1.5} />
              </IconButton>
            </Inline>
            <ChartGrid>
              {THUMBS.map(({ name, art, active }) => (
                <ChartType key={name}>
                  <Thumb $active={active}>{art}</Thumb>
                  {name}
                </ChartType>
              ))}
            </ChartGrid>
          </VisualTop>
          <Tabs role="tablist">
            <Tab role="tab" aria-selected="true" $active>图表属性</Tab>
            <Tab role="tab" aria-selected="false">高级设置</Tab>
          </Tabs>
          <SettingSection name="主题/颜色" />
          <SettingSection name="数据标签" toggle="off" />
          <SettingSection name="特殊值" />
          <SettingSection name="地图显示设置" />
          <SettingSection name="工具提示" toggle="on" />
          <SettingSection name="气泡设置" open>
            <RadiusPanel>
              气泡半径
              <RangeRow>
                小
                <RangeTrack $high={88}>
                  <Range type="range" defaultValue="0" aria-label="最小半径" />
                  <Range type="range" defaultValue="88" aria-label="最大半径" />
                </RangeTrack>
                大
              </RangeRow>
            </RadiusPanel>
          </SettingSection>
          <SettingSection name="标题" toggle="on" />
          <SettingSection name="卡片设置" />
        </Visual>
      </Body>
      <ThresholdDialog />
    </Frame>
  );
}

export default App;
